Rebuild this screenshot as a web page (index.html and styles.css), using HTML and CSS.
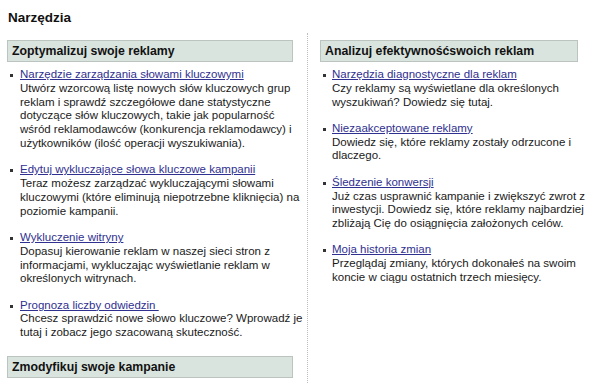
FILE: index.html
```html
<!DOCTYPE html>
<html lang="pl">
<head>
    <meta charset="UTF-8">
    <title>Narzędzia</title>
    <link rel="stylesheet" href="styles.css">
</head>
<body>
    <div class="page">
        <h1 class="title">Narzędzia</h1>

        <div class="columns">
            <div class="col col-left">
                <div class="section-head">Zoptymalizuj swoje reklamy</div>
                <ul class="tools">
                    <li>
                        <a href="#">Narzędzie zarządzania słowami kluczowymi</a>
                        <p>Utwórz wzorcową listę nowych słów kluczowych grup reklam i sprawdź szczegółowe dane statystyczne dotyczące słów kluczowych, takie jak popularność wśród reklamodawców (konkurencja reklamodawcy) i użytkowników (ilość operacji wyszukiwania).</p>
                    </li>
                    <li>
                        <a href="#">Edytuj wykluczające słowa kluczowe kampanii</a>
                        <p>Teraz możesz zarządzać wykluczającymi słowami kluczowymi (które eliminują niepotrzebne kliknięcia) na poziomie kampanii.</p>
                    </li>
                    <li>
                        <a href="#">Wykluczenie witryny</a>
                        <p>Dopasuj kierowanie reklam w naszej sieci stron z informacjami, wykluczając wyświetlanie reklam w określonych witrynach.</p>
                    </li>
                    <li>
                        <a href="#">Prognoza liczby odwiedzin&nbsp;</a>
                        <p>Chcesz sprawdzić nowe słowo kluczowe? Wprowadź je tutaj i zobacz jego szacowaną skuteczność.</p>
                    </li>
                </ul>
                <div class="section-head">Zmodyfikuj swoje kampanie</div>
            </div>

            <div class="col col-right">
                <div class="section-head">Analizuj efektywnośćswoich reklam</div>
                <ul class="tools">
                    <li>
                        <a href="#">Narzędzia diagnostyczne dla reklam</a>
                        <p>Czy reklamy są wyświetlane dla określonych wyszukiwań? Dowiedz się tutaj.</p>
                    </li>
                    <li>
                        <a href="#">Niezaakceptowane reklamy</a>
                        <p>Dowiedz się, które reklamy zostały odrzucone i dlaczego.</p>
                    </li>
                    <li>
                        <a href="#">Śledzenie konwersji</a>
                        <p>Już czas usprawnić kampanie i zwiększyć zwrot z inwestycji. Dowiedz się, które reklamy najbardziej zbliżają Cię do osiągnięcia założonych celów.</p>
                    </li>
                    <li>
                        <a href="#">Moja historia zmian</a>
                        <p>Przeglądaj zmiany, których dokonałeś na swoim koncie w ciągu ostatnich trzech miesięcy.</p>
                    </li>
                </ul>
            </div>
        </div>
    </div>
</body>
</html>
```

FILE: styles.css
```css
body {
    margin: 0;
    background: #fff;
    color: #1a1a1a;
    font-family: Arial, "Liberation Sans", sans-serif;
    font-size: 11.5px;
}

.page {
    padding: 10px 7px 0 7px;
}

.title {
    font-size: 13.5px;
    line-height: 15px;
    font-weight: bold;
    margin: 0 0 8px 1px;
    color: #111;
}

.columns {
    display: flex;
    min-height: 350px;
}

.col {
    padding-top: 7px;
}

.col-left {
    width: 286px;
    margin-right: 14px;
}

.col-left .tools {
    margin-right: -14px;
}

.col-right {
    flex: 1;
    border-left: 1px dotted #bcbcbc;
    padding-left: 12px;
}

.col-right .section-head {
    margin-right: 15px;
}

.col-right .tools li {
    padding-left: 12px;
}

.section-head {
    background: #dae4df;
    border: 1px solid #bcc4c0;
    padding: 3px 4px;
    font-size: 12.3px;
    line-height: 14px;
    font-weight: bold;
    color: #111;
}

.tools {
    list-style: none;
    margin: 6px 0 16px 0;
    padding: 0;
}

.tools li {
    position: relative;
    padding-left: 13px;
    margin-bottom: 12.5px;
    line-height: 13.8px;
}

.tools li:last-child {
    margin-bottom: 0;
}

.tools li::before {
    content: "";
    position: absolute;
    left: 3px;
    top: 6px;
    width: 3px;
    height: 3px;
    background: #333;
}

.tools a {
    color: #303090;
    text-decoration: underline;
}

.tools p {
    margin: 0;
}
```
